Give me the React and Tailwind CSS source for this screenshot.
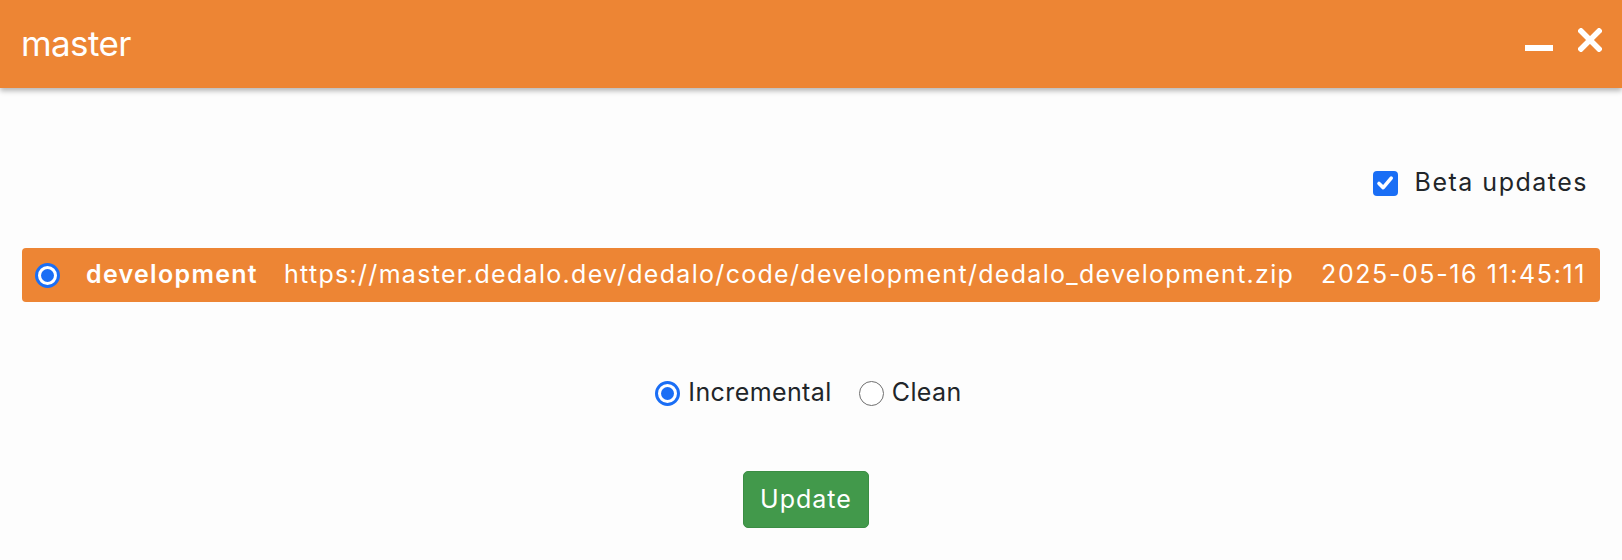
import React from 'react'

const ORANGE = 'bg-[#ed8534]'

function RadioDot({ checked }) {
  if (!checked) {
    return <span className="inline-block w-[25px] h-[25px] rounded-full border-[1.5px] border-[#6f6f6f] bg-white shrink-0" />
  }
  return (
    <span className="flex items-center justify-center w-[25px] h-[25px] rounded-full border-[3px] border-[#1a6ef5] bg-white shrink-0">
      <span className="block w-[13px] h-[13px] rounded-full bg-[#1a6ef5]" />
    </span>
  )
}

export default function App() {
  return (
    <div className="min-h-[560px] bg-[#fdfdfd] text-[#212529] font-['Inter','Liberation_Sans',sans-serif] text-[25px] tracking-[1.3px]">
      {/* Title bar */}
      <header className={`${ORANGE} h-[88px] flex items-center justify-between pl-[21px] pr-[20px] shadow-[0_3px_5px_rgba(0,0,0,0.28)] relative`}>
        <h1 className="text-white text-[35px] tracking-[-0.6px] leading-none pb-[2px]">master</h1>
        <div className="flex items-center gap-[25px] text-white">
          <svg width="28" height="6" viewBox="0 0 28 6" className="mt-[7px]">
            <rect x="0" y="0" width="28" height="6" fill="white" />
          </svg>
          <svg width="24" height="24" viewBox="0 0 24 24" className="-mt-[8px]">
            <path d="M3 3 L21 21 M21 3 L3 21" stroke="white" strokeWidth="5.5" strokeLinecap="square" />
          </svg>
        </div>
      </header>

      <main className="px-[22px] pt-[77px]">
        {/* Beta updates */}
        <div className="flex justify-end items-center h-9 pr-[12px]">
          <label className="flex items-center gap-[17px] tracking-[1.5px]">
            <span className="flex items-center justify-center w-[25px] h-[25px] rounded-[4px] bg-[#1a6ef5]">
              <svg width="20" height="20" viewBox="0 0 20 20">
                <path d="M4 10.5 L8.2 14.6 L16.2 5.2" fill="none" stroke="white" strokeWidth="3.6" strokeLinecap="round" strokeLinejoin="round" />
              </svg>
            </span>
            Beta updates
          </label>
        </div>

        {/* Release row */}
        <div className={`${ORANGE} mt-[47px] h-[54px] rounded-[4px] flex items-center pl-[13px] pr-[14px] text-white gap-[26px] whitespace-nowrap`}>
          <RadioDot checked />
          <span className="font-semibold">development</span>
          <span>https://master.dedalo.dev/dedalo/code/development/dedalo_development.zip</span>
          <span className="ml-auto tracking-[1.6px]">2025-05-16 11:45:11</span>
        </div>

        {/* Mode */}
        <div className="mt-[73px] h-9 flex items-center justify-center pr-[5px] tracking-[0.4px]">
          <label className="flex items-center gap-[8px]">
            <RadioDot checked />
            Incremental
          </label>
          <label className="flex items-center gap-[8px] ml-[27px]">
            <RadioDot />
            Clean
          </label>
        </div>

        <div className="mt-[60px] flex justify-center pr-[10px]">
          <button className="w-[126px] h-[57px] rounded-[5px] bg-[#42994b] border border-[#3b8d44] text-white tracking-[1px]">
            Update
          </button>
        </div>
      </main>
    </div>
  )
}
